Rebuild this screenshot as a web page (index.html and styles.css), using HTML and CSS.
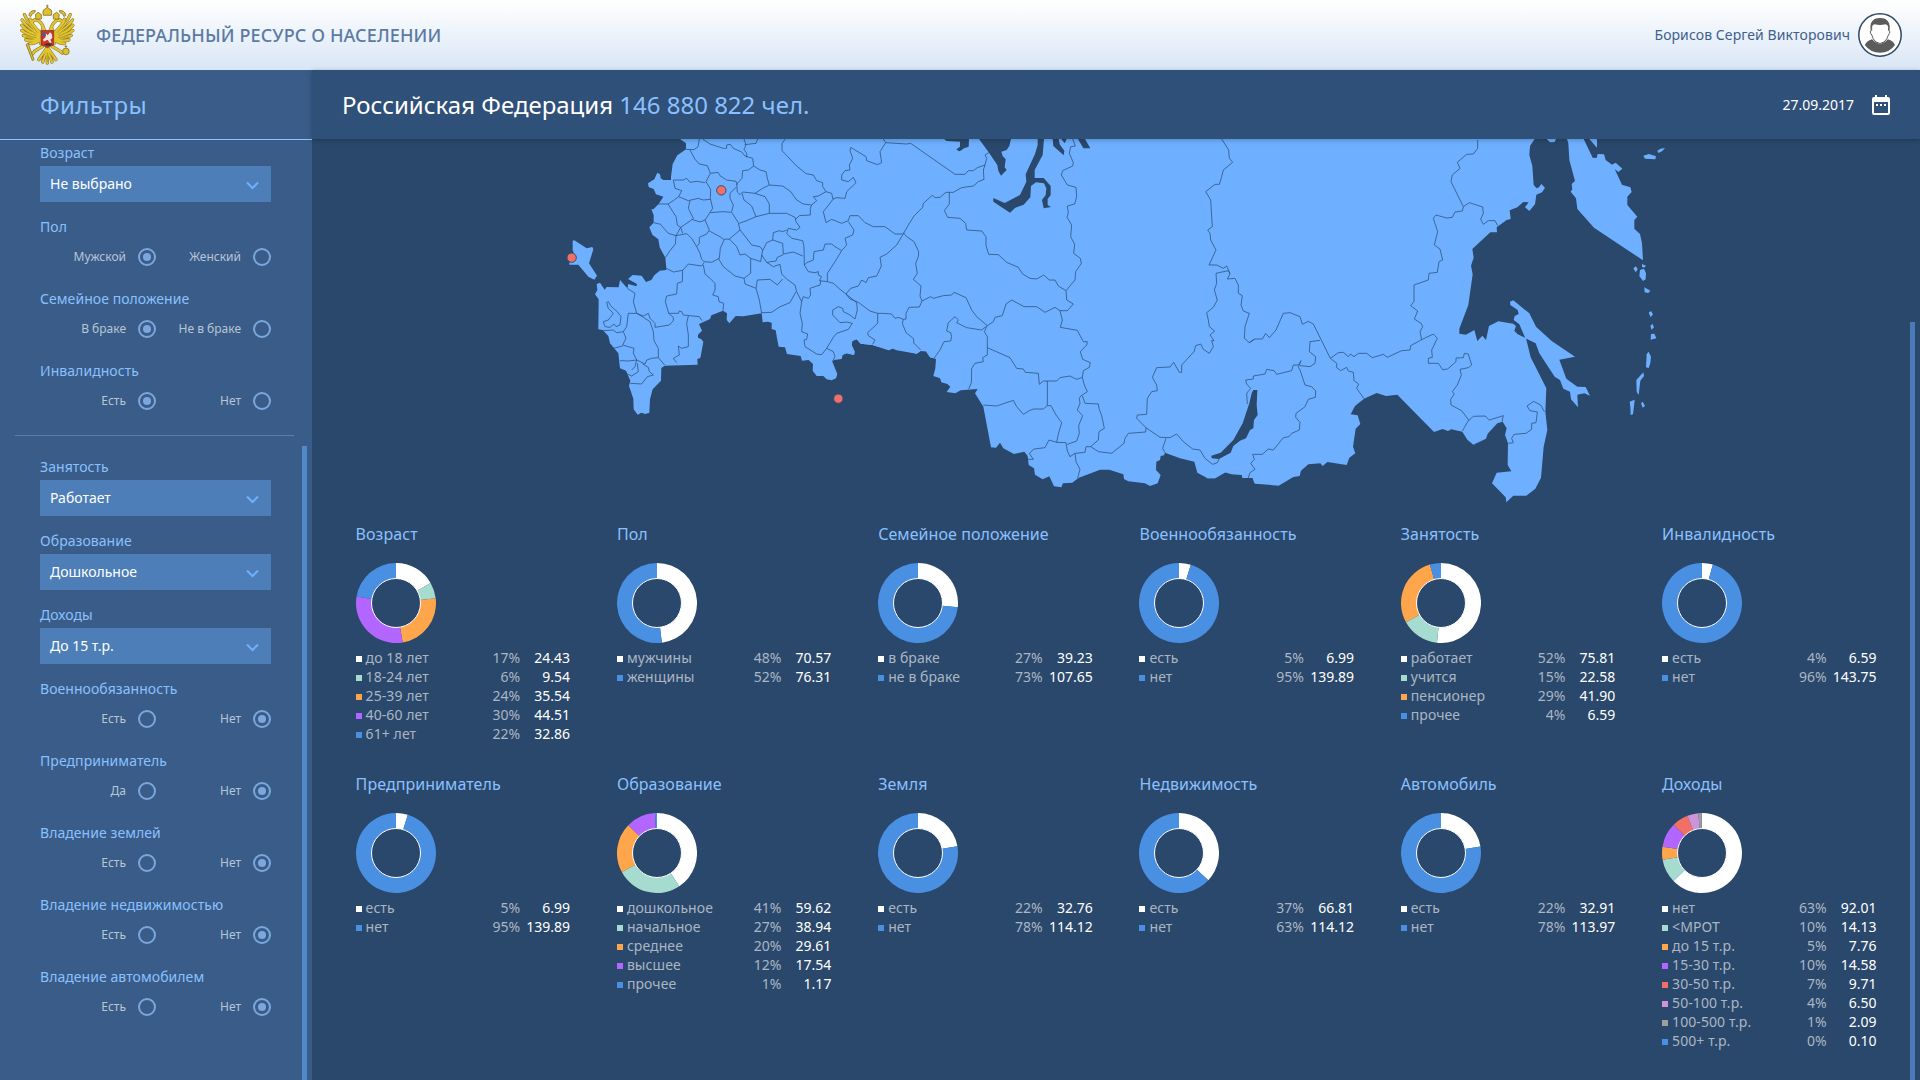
FILE: index.html
```html
<!DOCTYPE html>
<html lang="ru">
<head>
<meta charset="utf-8">
<title>Федеральный ресурс о населении</title>
<link rel="stylesheet" href="styles.css">
</head>
<body>
<header class="topbar">
  <svg class="emblem" viewBox="60 10 168 184" aria-hidden="true">
    <g class="feather-edge">
      <path d="M122 100Q88 78 73 42M120 104Q84 86 66 58M118 106Q82 96 65 74M118 108Q84 104 65 90M118 112Q90 114 70 105M120 116Q95 124 77 118M122 118Q104 130 90 129M120 96Q98 76 90 56"/>
      <path d="M162 100Q196 78 211 42M164 104Q200 86 218 58M166 106Q202 96 219 74M166 108Q200 104 219 90M166 112Q194 114 214 105M164 116Q189 124 207 118M162 118Q180 130 194 129M164 96Q186 76 194 56"/>
      <path d="M142 140L116 178M142 140L128 185M142 140V188M142 140L156 185M142 140L168 178M128 138L104 152L98 160M156 138L180 152L188 158"/>
      <path d="M136 100Q130 76 122 66Q108 52 98 62M148 100Q154 76 162 66Q176 52 186 62M128 84L122 130M156 84L162 130"/>
    </g>
    <g class="feather">
      <path d="M122 100Q88 78 73 42M120 104Q84 86 66 58M118 106Q82 96 65 74M118 108Q84 104 65 90M118 112Q90 114 70 105M120 116Q95 124 77 118M122 118Q104 130 90 129M120 96Q98 76 90 56"/>
      <path d="M162 100Q196 78 211 42M164 104Q200 86 218 58M166 106Q202 96 219 74M166 108Q200 104 219 90M166 112Q194 114 214 105M164 116Q189 124 207 118M162 118Q180 130 194 129M164 96Q186 76 194 56"/>
      <path d="M142 140L116 178M142 140L128 185M142 140V188M142 140L156 185M142 140L168 178M128 138L104 152L98 160M156 138L180 152L188 158"/>
      <path d="M136 100Q130 76 122 66Q108 52 98 62M148 100Q154 76 162 66Q176 52 186 62M128 84L122 130M156 84L162 130"/>
    </g>
    <path class="feather-shade" d="M112 96L82 58M108 101L74 74M106 106L74 92M108 111L80 109M172 96L202 58M176 101L210 74M178 106L210 92M176 111L204 109M135 158L124 180M142 158V184M149 158L160 180"/>
    <g class="gold">
      <path d="M130 44Q126 28 134 26L142 20L150 26Q158 28 154 44Z"/>
      <path d="M142 12V21M138 16H146"/>
      <path d="M108 56L106 42L114 35L124 42L124 55ZM160 55L160 42L170 35L178 42L176 56Z"/>
      <path d="M86 44Q90 28 106 30L104 36Q94 38 92 48ZM198 44Q194 28 178 30L180 36Q190 38 192 48Z"/>
      <path d="M78 132L84 128L102 178L97 181Z"/>
      <circle cx="198" cy="153" r="10"/><path d="M198 143V134M194 138H202"/>
    </g>
    <path class="shield" d="M123 90H161V134Q152 136 142 142Q132 136 123 134Z"/>
    <path class="rider" d="M137 98L143 104L150 95L155 100L157 112L151 118L155 127H149L143 118L131 123L129 116L136 112Z"/>
    <path class="cloak" d="M127 98L136 97L138 107L129 109Z"/>
    <path class="dragon" d="M132 132Q142 126 158 131L150 136H140Z"/>
  </svg>
  <h1 class="brand">ФЕДЕРАЛЬНЫЙ РЕСУРС О НАСЕЛЕНИИ</h1>
  <span class="user-name">Борисов Сергей Викторович</span>
  <svg class="avatar" viewBox="0 0 44 44" aria-hidden="true">
    <circle class="avatar-ring" cx="22" cy="22" r="21.2"/>
    <path class="avatar-fill" d="M6.800 32Q8.500 28 14 26.200Q17 30 22 31.200Q27 30 30 26.200Q35.500 28 37 32Q31.500 39.800 22 39.800Q12.500 39.800 6.800 32Z"/>
    <path class="avatar-face" d="M13 13Q13 24 17 27.300Q22 32 27 27.300Q31 24 31 13Z"/>
    <path class="avatar-fill" d="M12.800 18.500Q10.500 5 22 5Q33.500 5 31.400 18.500L30.200 14Q29.500 11.500 27.500 11.300Q22 12.800 16.500 11.300Q14.600 11.500 14 14Z"/>
    <path class="avatar-line" d="M13.700 14.500V17.500Q10.700 18.200 13.800 22Q14.500 26 18 29Q22 32 26 29Q29.500 26 30.400 22Q33.300 18.200 30.500 17.500V14.500"/>
  </svg>
</header>

<div class="workspace">
  <aside class="sidebar">
    <h2 class="sidebar-title">Фильтры</h2>
    <form class="filters" id="filters-main"></form>
    <hr class="divider">
    <form class="filters" id="filters-extra"></form>
    <span class="scroll scroll-side"></span>
  </aside>

  <main class="content">
    <div class="summary">
      <h2 class="region">Российская Федерация <span class="population">146 880 822 чел.</span></h2>
      <time class="date">27.09.2017</time>
      <svg class="calendar" viewBox="0 0 18 20" aria-hidden="true">
        <path fill-rule="evenodd" d="M3 0H5V2H13V0H15V2H16Q18 2 18 4V18Q18 20 16 20H2Q0 20 0 18V4Q0 2 2 2H3ZM2 7V18H16V7ZM4 9H6V11H4ZM8 9H10V11H8ZM12 9H14V11H12Z"/>
      </svg>
    </div>

    <svg class="map" viewBox="-684 27 4824 1113" aria-label="Карта России">
      <g class="land">
        <path d="M420 27 438 40 438 58 412 76 398 102 393 140 393 150 370 150 362 145 360 133 352 128 343 148 324 160 326 171 341 177 348 193 370 200 356 222 340 238 334 238 341 255 341 278 328 292 337 314 355 328 359 352 376 383 379 415 379 420 359 422 343 436 334 450 318 456 305 437 278 435 264 447 291 462 289 469 265 462 262 475 240 450 236 472 200 471 194 479 180 458 170 462 172 480 165 493 176 508 175 598 188 600 205 618 210 640 235 670 240 715 258 722 271 752 267 768 280 806 281 838 293 854 304 848 316 852 328 848 330 808 338 778 363 752 364 714 374 707 473 704 472 687 481 684 484 668 490 635 484 628 474 623 474 614 486 602 477 582 510 567 514 556 549 542 561 550 560 570 568 580 587 558 610 559 665 550 668 577 684 575 695 578 695 597 707 601 711 625 716 650 735 652 741 672 782 678 786 692 806 690 819 702 818 722 830 738 850 738 860 748 875 751 888 745 892 732 877 695 882 690 905 687 908 674 920 670 942 675 944 665 935 645 937 633 950 628 962 641 997 645 1025 653 1047 661 1060 655 1130 671 1142 663 1158 664 1170 682 1186 685 1200 685 1200 27Z"/>
        <path d="M98 332 103 331 140 355 157 351 160 358 147 400 171 437 163 449 145 440 115 404 88 404 88 399 105 380 98 360Z"/>
      </g>
      <g class="land" transform="translate(900)">
        <path d="M0 27H1262V1062L1243 1060 1238 1044 1208 1044 1205 1035 1175 1033 1157 1027 1125 1045 1103 1045 1072 1028 1063 995 1020 985 975 968 972 976 962 978 960 990 949 995 948 1020 962 1035 953 1060 930 1068 915 1060 865 1054 852 1047 850 1033 808 1019 780 1019 715 1044 697 1058 669 1060 664 1072 642 1069 628 1039 608 1048 585 1034 582 1015 566 1005 563 978 553 965 522 972 490 955 480 938 468 953 453 952 430 830 405 790 413 777 362 781 346 790 320 786 331 770 322 762 304 757 300 745 280 738 286 715 288 687 270 682 258 664 242 663 230 671 170 661 155 655 147 661 97 645 62 641 50 628 37 633 35 645 44 665 42 675 20 670 8 674 0 686Z"/>
      </g>
      <g class="land" transform="translate(2040)">
        <path d="M-40 27H944L930 48 928 75 937 108 941 165 950 175 957 172 964 162 975 173 966 187 949 194 945 223 928 243 915 232 926 217 910 216 892 232 869 241 872 267 860 270 830 292 831 307 811 307 757 357 761 383 753 407 758 433 745 525 718 596 718 611 738 614 763 600 772 633 787 617 798 630 807 588 835 574 880 581 888 588 883 602 892 612 918 625 932 682 979 775 976 845 982 900 971 950 963 1043 946 1076 919 1097 880 1097 859 1117 857 1102 816 1060 830 1028 874 1024 863 1005 864 940 855 915 860 895 848 875 832 880 803 911 798 926 760 944 742 929 727 905 694 898 684 903 668 897 642 906 532 794 498 798 470 789 432 806 405 828 392 853 413 856 421 882 407 896 399 950 406 970 388 983 380 1005 322 996 308 1008 301 1000 265 1003 243 1022 239 1038 220 1041 176 1067 106 1061 98 1044 68 1044 65 1033 35 1032 15 1027 -15 1045 -40 1045Z"/>
        <path d="M870 515 880 511 928 550 948 590 995 633 1065 680 1018 689 1039 746 1072 770 1097 771 1110 797 1093 790 1072 794 1074 832 1053 808 1050 785 1030 776 1020 750 1004 740 958 670 947 640 916 625 898 583 881 570 884 558 896 552 893 540 871 525Z"/>
        <path d="M1041 27H1091L1118 83 1130 84 1133 72 1152 73 1157 90 1176 104 1187 98 1207 116 1195 126 1184 117 1206 164 1231 172 1235 186 1222 200 1222 225 1252 260 1243 270 1243 296 1260 312 1266 340 1269 391 1122 293 1072 237 1068 205 1052 185 1057 178 1055 162 1065 153 1048 90 1045 40Z"/>
        <path d="M1108 27H1131V53ZM980 27H1008L1004 36 990 37ZM1270 77 1287 72 1308 79 1306 88 1275 86ZM1312 62 1322 56 1335 54 1327 63 1315 69Z"/>
        <path d="M1240 415 1248 409 1253 418 1247 427ZM1266 402 1278 407 1272 413 1266 410ZM1260 420 1272 416 1278 430 1277 448 1269 453 1258 438ZM1273 472 1291 482 1285 489 1274 487ZM1286 548 1293 543 1299 553 1292 562ZM1291 588 1297 581 1302 592 1295 599ZM1293 612 1303 611 1309 625 1292 629ZM1280 672 1286 665 1293 680 1291 700 1286 714 1278 712ZM1249 750 1270 727 1272 738 1261 752 1256 795 1250 785ZM1229 815 1244 809 1243 820 1239 853 1232 855 1231 830ZM1263 820 1268 815 1275 828 1268 833Z"/>
      </g>
      <g class="water" transform="translate(900)">
        <path d="M312 27H387L386 50 372 55 362 62 357 64 349 58 360 50 360 35 320 33ZM417 27H513L508 48 500 60 484 65 488 78 497 88 494 112 500 120 483 137 475 122 472 105 447 68ZM593 27H612L608 75 584 120 584 144 611 144 632 168 632 195 623 207 623 225 633 231 611 235 606 210 617 195 619 175 612 160 588 157 573 168 571 202 551 224 525 234 510 248 460 215 460 204 494 219 540 195 559 155 557 133 585 72 593 45ZM638 27H656L659 43 673 62 671 76 640 48ZM664 27H680L674 40ZM714 27H735L751 55 730 55Z"/>
        <path d="M1240 780H1252L1250 825 1253 855 1242 870 1240 895 1230 900 1218 925 1200 932 1180 948 1172 968 1137 987 1115 985 1114 977 1142 968 1180 930 1208 880 1228 820 1235 790Z"/>
      </g>
      <g class="border">
        <path d="M478 27 474 50 462 59 438 58M450 60 465 88 478 102 502 107 511 130 534 127 540 137 560 150 588 154 592 165M488 27 510 42 550 55 560 55 560 45 571 43 580 55 605 66 615 78 638 85 641 108 660 120 678 125 682 145 688 165 668 175 645 190M612 27 618 45 612 58 620 70 620 82M653 27 648 40 614 44"/>
        <path d="M641 108 625 120 608 122 606 145 590 162 592 186 600 194 608 186 645 190 675 200 688 222 688 250M736 27 726 40 726 62 770 108 798 131 820 135 830 152 848 158 848 170 858 185 875 190 879 208M688 165 728 168 752 185 770 210 790 222 815 225 830 212 820 200 835 198 858 185M815 225 811 235 811 255 778 257 765 270"/>
        <path d="M648 260 688 250 740 250 765 262 768 275 780 292 770 300 745 295 740 310 755 325 788 332 792 350 793 405M511 130 498 155 512 178 511 205 518 235 495 270 508 300 500 312 478 322 478 340 470 350 480 370 485 388 492 395M400 150 430 150 440 145 450 157 470 154 495 158M400 150 405 175 425 182 416 200 445 212 475 205 490 210 511 208M416 200 400 212 384 222 356 222M384 222 408 260 412 285 422 292 455 270 460 265 445 235 450 212"/>
        <path d="M341 278 362 283 370 293 385 310 408 317 422 292 428 310M408 317 406 342 390 362 376 383M408 317 440 311 455 325 470 350M455 268 480 276 495 270M511 248 550 245 575 247 595 278 600 300 568 327 550 328 540 320 508 303M588 172 570 190 570 205 580 225 575 245M606 190 612 210 635 228 648 260 625 270 598 280M600 300 620 325 635 345 660 350 668 360 662 395 632 385 615 372 600 375 590 350 568 327M552 330 541 355 538 385 515 397 492 395M535 385 550 410 585 438 612 445 632 430 632 385"/>
        <path d="M740 300 728 305 718 302 700 308 698 330 680 338 668 362M698 330 728 340 730 372 760 366 788 378M730 374 712 382 708 393 680 397 665 375M793 405 805 425 825 428 835 425 835 435 845 440 838 452 862 455 862 430 885 395 905 362 885 350 875 342 855 342 850 360 822 365 820 390 800 398 793 405M680 397 700 410 720 403 725 432 740 447 765 465 770 485 785 515 790 500 805 505 812 495 810 475 840 465 842 452M728 447 712 465 690 448 652 450 648 475 658 510 665 550M665 548 695 547 720 530 750 518 768 485M612 445 615 462 648 475"/>
        <path d="M379 415 400 426 428 421 445 402 485 408 492 398M490 405 495 432 510 445 525 460 525 480 518 495 535 500 537 515 551 520 549 542M428 421 427 455 412 460 410 492 380 498 376 515 386 550 415 550 418 543 425 545 430 555 478 560 486 572M262 475 285 490 280 515 290 550 310 558 325 550 330 565 345 580 345 592 388 585 400 572 400 562 386 550M445 558 440 580 445 615 445 650 425 655 415 648 418 675 400 685 410 698"/>
        <path d="M290 550 265 550 260 590 250 605 258 625 248 645 282 655 280 670 290 690 265 693 240 692M290 550 310 562 330 575 340 605 342 632 355 655 355 683 335 685 320 690 315 702 290 690M355 683 374 705M200 518 205 515 212 527 220 535 232 545 243 560 240 585 228 590 222 582 210 592 195 590 190 575 205 570 220 550 205 535ZM188 602 220 600 230 608 250 605M220 655 248 648M308 702 325 712 328 725 340 735 322 740 305 762 271 760M290 690 285 710 275 720M262 732 275 738 295 725 292 700"/>
        <path d="M785 515 780 550 787 580 785 605 803 612 800 628 792 630 795 650 830 672 845 674 860 655 880 665 885 680 877 695M860 655 880 622 890 610 925 598 937 580 920 576 900 578 878 555 878 540 895 530 908 535 910 545 930 555 945 567 952 540 950 518 918 492 900 478 880 460 862 455M858 278 850 245 879 208 888 203 915 205 920 185 948 158 940 142 925 155 905 150 905 135 915 122 930 120 928 105 938 85 930 62 932 52 978 80 980 92 1012 104 1025 98 1020 65 1037 38 1030 27"/>
        <path d="M858 278 875 268 905 280 925 272 930 257 955 257 975 278 1000 290 1035 290 1065 312 1088 312M925 275 942 300 938 315 915 325 920 345 905 362"/>
      </g>
      <g class="border" transform="translate(900)">
        <path d="M137 38 200 42 212 40 345 133 375 133 385 122 400 122 412 113 435 105 430 120 432 148 415 155 400 168 365 173 340 187 318 187 300 202 285 203 277 196 250 220 248 232 222 258 205 285 188 315 170 345 140 372 120 382 124 408 110 438 85 443 78 458 65 450 55 468 32 475 18 492 30 507 55 517 90 543 113 550 130 550 155 552 165 565 175 562 190 568M435 105 440 85 435 75 447 68"/>
        <path d="M328 187 328 222 313 242 323 262 360 265 377 280 380 300 425 303 438 320 438 347 446 373 475 374 500 397 535 412 548 432 570 445 590 447 611 435 628 450 645 450 655 468 678 482M190 308 200 320 222 335 236 365 235 380 227 400 232 430 220 448 243 468 240 498 246 513 238 531 207 532 198 550 198 567 190 568 187 580 198 608 220 625 222 640 242 660M113 550 113 580 83 608 85 617 105 630 98 643"/>
        <path d="M246 513 272 500 280 505 310 497 335 495 342 487 378 503 395 540 410 560 442 587 460 575 465 562 487 557 498 522 515 510 552 530 590 530 615 547 645 532 660 542 682 542 700 522 680 510 678 482 705 450 707 425 724 400 721 385 701 370 704 343 692 320 695 285 681 262 685 248 682 228 704 222 710 200 708 172 682 165 664 135 668 122 698 108 700 98 688 70 692 50 706 48 698 27"/>
        <path d="M442 587 425 600 380 593 350 578 355 570 345 560 325 578 320 603 332 608 335 620 332 633 312 635 300 660 282 685M440 590 433 605 442 620 442 675 428 683 430 695 405 700 395 715 394 758 386 777M442 653 510 683 530 715 550 717 556 727 595 730 598 763 610 753 650 753 660 743 690 738 710 748 727 742M660 542 667 570 661 592 712 601 730 635 742 635 740 645 721 665 728 688 751 698 748 712 730 722 727 742 733 765 742 785 722 798 718 805 720 820 712 840 728 857 716 887 718 910 710 933 682 943"/>
        <path d="M622 753 622 827 610 837 580 837 568 842 550 853 530 830 520 811 470 828 430 825M622 827 633 827 648 855 665 878 655 912 650 937 627 930 615 953 582 957 568 970 580 988 563 988M650 937 678 938 682 963 690 980 705 970 708 995 720 1018 713 1044M727 797 735 820 775 822 777 835 785 857 793 895 777 905 775 930 752 950 738 950 735 967 705 970"/>
        <path d="M752 950 775 965 815 970 852 940 855 925 865 910 917 906 918 893 890 865 892 855 920 853 922 805 935 785 952 782 950 765 937 742 950 713 990 711 1001 697 1018 727 1025 727 1025 705 1062 665 1067 647 1082 642 1090 658 1108 670 1120 650 1115 632 1122 632 1110 615 1124 603 1108 590 1105 570 1100 548 1120 532 1132 510 1123 480 1130 460 1128 430 1165 422 1170 432 1162 447 1185 445 1195 465 1195 490 1207 497 1203 525 1210 543 1228 550 1215 590 1213 625 1228 638 1243 627M1145 27 1166 60 1168 85 1178 97 1150 120 1145 140 1138 163 1125 163 1097 185 1112 210 1117 290 1103 300 1110 310 1112 330 1128 360 1107 405 1130 405 1150 415 1160 408 1170 430M918 893 960 922 990 923 1010 912 1030 935 1058 957 1080 960 1095 985 1118 1003 1132 998 1137 987M978 925 968 955 975 968"/>
      </g>
      <g class="border" transform="translate(2040)">
        <path d="M85 1044 90 1028 105 1018 92 1000 103 988 98 973 127 973 145 957 160 960 190 923 207 920 215 910 238 900 240 877 227 862 228 850 255 830 265 808 286 802 287 783 275 770 255 765 240 720 235 712 243 692 235 705 220 705 215 722 170 733 162 722 140 718 135 732 100 738 100 747 77 750 80 762 92 775 80 790 82 822M88 638 105 627 127 627 137 610 148 623 168 600 190 550 210 548 240 560 247 583 265 574 280 582 331 685 350 700 350 713 362 722 380 712 385 723 400 727 402 752 416 762 410 775 432 806M300 631 270 635 268 665 287 680 285 700 270 710 240 707"/>
        <path d="M331 685 355 668 370 667 385 680 392 672 402 680 415 670 440 670 457 683 490 673 502 682 545 662 570 660 572 647 605 629 640 612 652 625 635 660 637 682 625 685 625 700 655 700 668 719 683 717 708 695 708 684 730 683 733 670 745 672 755 705 745 713 720 718 724 735 712 765 697 785 703 792 692 808 693 825 725 842 746 870 727 903M605 629 600 605 608 590 603 580 583 567 593 543 572 527 582 515 582 465 625 450 627 430 652 427 657 395 668 390 660 357 643 345 653 305 640 265 648 255 680 264 697 262 705 246 727 243 730 230 693 155 697 135 720 115 712 97 740 73 760 72 773 55 773 30"/>
        <path d="M730 230 748 218 788 231 790 250 782 268 790 283 805 272 825 272 833 287M746 872 760 859 795 858 808 870 850 857 846 875M973 845 962 825 941 814 921 828 930 842 952 846 948 878 935 880 935 898 918 910 882 913 875 925 880 938 865 940"/>
      </g>
      <g class="pin">
        <circle cx="95" cy="383" r="14"/><circle cx="544" cy="181" r="14"/><circle cx="895" cy="806" r="14"/>
      </g>
    </svg>

    <section class="charts" id="charts"></section>
    <span class="scroll scroll-main"></span>
  </main>
</div>
<script src="app.js"></script>
</body>
</html>
```
FILE: styles.css
```css
* { box-sizing: border-box; }

body {
  margin: 0;
  height: 1080px;
  overflow: hidden;
  display: flex;
  flex-direction: column;
  background: #2a486b;
  color: #fff;
  font: 14px/19px "Noto Sans", "Open Sans", sans-serif;
}

h1, h2, h3 { margin: 0; font-weight: 400; }

/* Top bar */
.topbar {
  flex: none;
  display: flex;
  align-items: center;
  height: 70px;
  padding: 0 18px 0 20px;
  background: linear-gradient(#fff, #d9e6f6);
}
.emblem { width: 56px; height: 61px; margin-top: -2px; }
.feather-edge, .feather, .feather-shade { fill: none; stroke-linecap: round; }
.feather-edge { stroke: #86732a; stroke-width: 10; }
.feather { stroke: #e2c42f; stroke-width: 7; }
.feather-shade { stroke: #8f7a26; stroke-width: 1.6; }
.gold { fill: #dfc02c; stroke: #86732a; stroke-width: 2.5; }
.shield { fill: #d2322b; stroke: #6e3b1c; stroke-width: 2; }
.rider { fill: #f1e9e6; }
.cloak { fill: #2f62ae; }
.dragon { fill: #3d3426; }
.brand {
  margin-left: 20px;
  color: #5b7ba3;
  font-size: 18px;
  font-weight: 500;
  letter-spacing: .12px;
  line-height: 24px;
}
.user-name {
  margin: -1px 0 0 auto;
  color: #40608c;
  letter-spacing: .08px;
}
.avatar { width: 44px; height: 44px; margin-left: 8px; }
.avatar-ring { fill: #fff; stroke: #2a486b; stroke-width: 1.5; }
.avatar-fill { fill: #5c5c5c; }
.avatar-face { fill: #fff; }
.avatar-line { fill: none; stroke: #5c5c5c; stroke-width: 1; }

.workspace { flex: 1; min-height: 0; display: flex; }

/* Sidebar */
.sidebar {
  position: relative;
  flex: none;
  width: 312px;
  background: #395d88;
}
.sidebar-title {
  height: 70px;
  padding-left: 40px;
  border-bottom: 1px solid #8ec1ff;
  color: #8ac0ff;
  font-size: 24px;
  letter-spacing: .4px;
  line-height: 70px;
}
.filters {
  display: flex;
  flex-direction: column;
  gap: 12px;
  padding: 0 41px 0 40px;
}
.field { display: flex; flex-direction: column; }
.field-label {
  height: 26px;
  color: #8ac0ff;
  letter-spacing: .06px;
  line-height: 26px;
}
.select {
  display: flex;
  align-items: center;
  justify-content: space-between;
  height: 36px;
  padding: 0 12px 2px 10px;
  background: #4d7eb8;
}
.chevron { width: 13px; height: 9px; margin-top: 5px; fill: none; stroke: #6eb0ff; stroke-width: 2; }
.radios {
  display: grid;
  grid-template-columns: 116px 115px;
  height: 34px;
  color: #b8c5d6;
  font-size: 12px;
}
.radio { display: flex; align-items: center; justify-content: flex-end; gap: 12px; }
.radio-name { padding-bottom: 1px; line-height: 17px; }
.radio-mark {
  display: grid;
  place-items: center;
  width: 18px;
  height: 18px;
  border: 2px solid #7ba7dc;
  border-radius: 50%;
}
.radio-mark.checked::after {
  content: "";
  width: 8px;
  height: 8px;
  border-radius: 50%;
  background: #7ba7dc;
}
.divider {
  height: 1px;
  margin: 17px 18px 18px 15px;
  border: 0;
  background: #577fb0;
}

/* Main area */
.content {
  position: relative;
  flex: 1;
  min-width: 0;
  display: flex;
  flex-direction: column;
}
.summary {
  position: relative;
  z-index: 1;
  flex: none;
  display: flex;
  align-items: center;
  height: 69px;
  padding: 0 30px;
  background: #2f5079;
  box-shadow: 0 1px 5px rgba(0, 0, 0, .25);
}
.region { font-size: 24px; line-height: 34px; }
.population { color: #8ac0ff; }
.date { margin-left: auto; }
.calendar { width: 18px; height: 20px; margin-left: 18px; fill: #fff; }

.map { display: block; flex: none; width: 1608px; height: 371px; }
.land { fill: #6eb0ff; }
.water { fill: #2a486b; }
.border { fill: none; stroke: #2c5078; stroke-width: 2.3; }
.pin { fill: #f16f64; stroke: #2f4e74; stroke-width: 3; }

.charts {
  display: grid;
  grid-template-columns: repeat(6, 1fr);
  grid-auto-rows: 250px;
  column-gap: 46.8px;
  padding: 11px 43.4px 0 43.6px;
}
.chart-title {
  height: 42px;
  color: #8ac0ff;
  font-size: 16px;
  letter-spacing: .06px;
  line-height: 26px;
}
.donut { display: block; width: 80px; height: 80px; margin-bottom: 5px; }
.legend { margin: 0; padding: 0; list-style: none; }
.legend-row {
  display: grid;
  grid-template-columns: 6px 1fr 40px 50px;
  height: 19px;
  align-items: center;
  color: #aab6c4;
}
.swatch { width: 6px; height: 6px; margin-top: 3px; }
.legend-name { padding-left: 4px; letter-spacing: .08px; white-space: nowrap; }
.legend-share, .legend-value { text-align: right; }
.legend-value { color: #fff; }

/* Scroll thumbs */
.scroll { position: absolute; bottom: 0; width: 5px; }
.scroll-side { top: 376px; right: 5px; background: #5288c7; }
.scroll-main { top: 252px; right: 5px; background: #4a7ab8; }
```
FILE: app.js
```js
const WHITE = '#ffffff', MINT = '#a6dccf', ORANGE = '#ffa64d', VIOLET = '#b366ff',
      BLUE = '#4a90e2', RED = '#f16f64', PINK = '#ce93d8', GREY = '#9e9e9e';

const mainFilters = [
  { label: 'Возраст', value: 'Не выбрано' },
  { label: 'Пол', options: ['Мужской', 'Женский'], checked: 0 },
  { label: 'Семейное положение', options: ['В браке', 'Не в браке'], checked: 0 },
  { label: 'Инвалидность', options: ['Есть', 'Нет'], checked: 0 }
];
const extraFilters = [
  { label: 'Занятость', value: 'Работает' },
  { label: 'Образование', value: 'Дошкольное' },
  { label: 'Доходы', value: 'До 15 т.р.' },
  { label: 'Военнообязанность', options: ['Есть', 'Нет'], checked: 1 },
  { label: 'Предприниматель', options: ['Да', 'Нет'], checked: 1 },
  { label: 'Владение землей', options: ['Есть', 'Нет'], checked: 1 },
  { label: 'Владение недвижимостью', options: ['Есть', 'Нет'], checked: 1 },
  { label: 'Владение автомобилем', options: ['Есть', 'Нет'], checked: 1 }
];

// Each row: name, percent, millions of people, colour
const charts = [
  ['Возраст', [['до 18 лет', 17, '24.43', WHITE], ['18-24 лет', 6, '9.54', MINT], ['25-39 лет', 24, '35.54', ORANGE], ['40-60 лет', 30, '44.51', VIOLET], ['61+ лет', 22, '32.86', BLUE]]],
  ['Пол', [['мужчины', 48, '70.57', WHITE], ['женщины', 52, '76.31', BLUE]]],
  ['Семейное положение', [['в браке', 27, '39.23', WHITE], ['не в браке', 73, '107.65', BLUE]]],
  ['Военнообязанность', [['есть', 5, '6.99', WHITE], ['нет', 95, '139.89', BLUE]]],
  ['Занятость', [['работает', 52, '75.81', WHITE], ['учится', 15, '22.58', MINT], ['пенсионер', 29, '41.90', ORANGE], ['прочее', 4, '6.59', BLUE]]],
  ['Инвалидность', [['есть', 4, '6.59', WHITE], ['нет', 96, '143.75', BLUE]]],
  ['Предприниматель', [['есть', 5, '6.99', WHITE], ['нет', 95, '139.89', BLUE]]],
  ['Образование', [['дошкольное', 41, '59.62', WHITE], ['начальное', 27, '38.94', MINT], ['среднее', 20, '29.61', ORANGE], ['высшее', 12, '17.54', VIOLET], ['прочее', 1, '1.17', BLUE]]],
  ['Земля', [['есть', 22, '32.76', WHITE], ['нет', 78, '114.12', BLUE]]],
  ['Недвижимость', [['есть', 37, '66.81', WHITE], ['нет', 63, '114.12', BLUE]]],
  ['Автомобиль', [['есть', 22, '32.91', WHITE], ['нет', 78, '113.97', BLUE]]],
  ['Доходы', [['нет', 63, '92.01', WHITE], ['&lt;МРОТ', 10, '14.13', MINT], ['до 15 т.р.', 5, '7.76', ORANGE], ['15-30 т.р.', 10, '14.58', VIOLET], ['30-50 т.р.', 7, '9.71', RED], ['50-100 т.р.', 4, '6.50', PINK], ['100-500 т.р.', 1, '2.09', GREY], ['500+ т.р.', 0, '0.10', BLUE]]]
];

function field(f) {
  const control = f.options
    ? `<div class="radios">${f.options.map((o, i) =>
        `<span class="radio"><span class="radio-name">${o}</span><i class="radio-mark${i === f.checked ? ' checked' : ''}"></i></span>`).join('')}</div>`
    : `<div class="select">${f.value}<svg class="chevron" viewBox="0 0 13 9"><path d="M1 1.500L6.500 7L12 1.500"/></svg></div>`;
  return `<div class="field"><span class="field-label">${f.label}</span>${control}</div>`;
}

function donut(rows) {
  const total = rows.reduce((sum, r) => sum + +r[2], 0);
  const point = (radius, part) => {
    const a = part * 2 * Math.PI;
    return `${(40 + radius * Math.sin(a)).toFixed(2)} ${(40 - radius * Math.cos(a)).toFixed(2)}`;
  };
  let from = 0;
  const arcs = rows.map(r => {
    const to = from + r[2] / total;
    const large = to - from > 0.5 ? 1 : 0;
    const d = `M${point(40, from)}A40 40 0 ${large} 1 ${point(40, to)}L${point(24.5, to)}A24.5 24.5 0 ${large} 0 ${point(24.5, from)}Z`;
    from = to;
    return `<path d="${d}" fill="${r[3]}"/>`;
  }).join('');
  return `<svg class="donut" viewBox="0 0 80 80">${arcs}<circle cx="40" cy="40" r="24.5" fill="none" stroke="#fff"/></svg>`;
}

function chart([title, rows]) {
  const legend = rows.map(r =>
    `<li class="legend-row"><i class="swatch" style="background:${r[3]}"></i><span class="legend-name">${r[0]}</span>` +
    `<span class="legend-share">${r[1]}%</span><span class="legend-value">${r[2]}</span></li>`).join('');
  return `<article class="chart"><h3 class="chart-title">${title}</h3>${donut(rows)}<ul class="legend">${legend}</ul></article>`;
}

document.getElementById('filters-main').innerHTML = mainFilters.map(field).join('');
document.getElementById('filters-extra').innerHTML = extraFilters.map(field).join('');
document.getElementById('charts').innerHTML = charts.map(chart).join('');
```
